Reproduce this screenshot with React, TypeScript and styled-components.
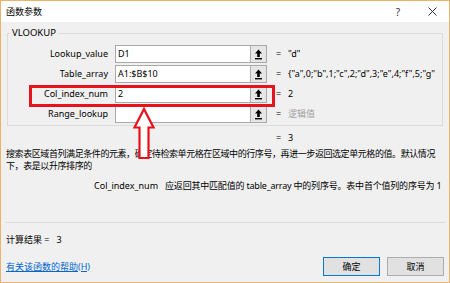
import styled, { createGlobalStyle } from 'styled-components';

const GlobalStyle = createGlobalStyle`
  html, body {
    margin: 0;
    padding: 0;
    background: #f0f0f0;
  }
`;

const Window = styled.div`
  position: relative;
  width: 450px;
  height: 283px;
  box-sizing: border-box;
  border: 1px solid #e9b469;
  display: flex;
  flex-direction: column;
  background: #f0f0f0;
  font-family: "Noto Sans", "Noto Sans CJK SC", sans-serif;
  font-size: 9px;
  color: #000;
  overflow: hidden;
`;

const TitleBar = styled.div`
  height: 21px;
  flex: none;
  display: flex;
  align-items: center;
  background: #fff;
  padding-left: 5px;
`;

const Title = styled.span`
  flex: 1;
  font-size: 9px;
`;

const TitleButton = styled.div`
  width: 34px;
  height: 21px;
  display: flex;
  align-items: center;
  justify-content: center;
  color: #333;
  font-size: 10px;
`;

const Body = styled.div`
  flex: 1;
  display: flex;
  flex-direction: column;
  padding: 0 5px 6px 5px;
`;

const GroupBox = styled.fieldset`
  margin: 5px 1px 0 1px;
  min-width: 0;
  padding: 6px 0 2px 0;
  border: 1px solid #dcdcdc;
`;

const Legend = styled.legend`
  margin-left: 2px;
  padding: 0 2px;
  line-height: 12px;
  font-size: 9.5px;
`;

const ArgGrid = styled.div`
  display: grid;
  grid-template-columns: 100px 152px 1fr;
  column-gap: 7px;
  row-gap: 2px;
`;

const ArgLabel = styled.div`
  text-align: right;
  line-height: 18px;
  white-space: nowrap;
`;

const Field = styled.div`
  height: 18px;
  box-sizing: border-box;
  display: flex;
  border: 1px solid #a9a9a9;
  background: #fff;
`;

const FieldText = styled.div`
  flex: 1;
  padding-left: 2px;
  line-height: 16px;
`;

const RefButton = styled.div`
  width: 15px;
  display: flex;
  align-items: center;
  justify-content: center;
  background: #e6e6e6;
  border-left: 1px solid #adadad;
`;

const ValueCell = styled.div<{ $muted?: boolean }>`
  display: flex;
  line-height: 18px;
  white-space: nowrap;
  padding-left: 2px;
  color: ${p => (p.$muted ? '#a0a0a0' : '#000')};
`;

const Eq = styled.span`
  width: 12px;
  flex: none;
  color: #000;
`;

const ResultLine = styled.div`
  display: flex;
  margin-top: 5px;
  padding-left: 270px;
  line-height: 13px;
`;

const Description = styled.div`
  margin-top: 4px;
  line-height: 12px;
  letter-spacing: -0.42px;
  white-space: nowrap;
`;

const ParamLine = styled.div`
  display: flex;
  margin-top: 8px;
  padding-left: 88px;
  line-height: 12px;
  letter-spacing: -0.2px;
  white-space: nowrap;
`;

const ParamName = styled.span`
  margin-right: 7px;
  letter-spacing: 0;
`;

const Footer = styled.div`
  margin-top: auto;
  display: flex;
  flex-direction: column;
`;

const Separator = styled.div`
  height: 1px;
  background: #dcdcdc;
  margin-right: -1px;
`;

const CalcResult = styled.div`
  margin-top: 11px;
  line-height: 12px;
  white-space: pre;
`;

const ActionRow = styled.div`
  display: flex;
  align-items: center;
  margin-top: 11px;
`;

const HelpLink = styled.a`
  flex: 1;
  color: #0066cc;
  text-decoration: underline;
  line-height: 12px;
`;

const DialogButton = styled.div<{ $primary?: boolean }>`
  width: 57px;
  height: 19px;
  box-sizing: border-box;
  margin-left: 7px;
  display: flex;
  align-items: center;
  justify-content: center;
  background: #e1e1e1;
  border: 1px solid ${p => (p.$primary ? '#0078d7' : '#adadad')};
`;

const Highlight = styled.div`
  position: absolute;
  left: 28px;
  top: 84px;
  width: 246px;
  height: 22px;
  box-sizing: border-box;
  border: 3px solid #e8121c;
`;

const ArrowMark = styled.svg`
  position: absolute;
  left: 131px;
  top: 106px;
`;

const RefIcon = () => (
  <svg width="9" height="11" viewBox="0 0 9 11">
    <path d="M4.5 0.5 L1 4.5 H3.2 V8 H5.8 V4.5 H8 Z" fill="#000" />
    <rect x="1" y="9" width="7" height="1.4" fill="#000" />
  </svg>
);

const CloseIcon = () => (
  <svg width="9" height="9" viewBox="0 0 9 9">
    <path d="M0.5 0.5 L8.5 8.5 M8.5 0.5 L0.5 8.5" stroke="#333" strokeWidth="1" />
  </svg>
);

type Arg = {
  name: string;
  input: string;
  value: string;
  muted?: boolean;
};

const args: Arg[] = [
  { name: 'Lookup_value', input: 'D1', value: '"d"' },
  { name: 'Table_array', input: 'A1:$B$10', value: '{"a",0;"b",1;"c",2;"d",3;"e",4;"f",5;"g"' },
  { name: 'Col_index_num', input: '2', value: '2' },
  { name: 'Range_lookup', input: '', value: '逻辑值', muted: true },
];

export default function App() {
  return (
    <>
      <GlobalStyle />
      <Window>
        <TitleBar>
          <Title>函数参数</Title>
          <TitleButton>?</TitleButton>
          <TitleButton>
            <CloseIcon />
          </TitleButton>
        </TitleBar>
        <Body>
          <GroupBox>
            <Legend>VLOOKUP</Legend>
            <ArgGrid>
              {args.map(a => [
                <ArgLabel key={a.name + 'l'}>{a.name}</ArgLabel>,
                <Field key={a.name + 'f'}>
                  <FieldText>{a.input}</FieldText>
                  <RefButton>
                    <RefIcon />
                  </RefButton>
                </Field>,
                <ValueCell key={a.name + 'v'} $muted={a.muted}>
                  <Eq>=</Eq>
                  <span>{a.value}</span>
                </ValueCell>,
              ])}
            </ArgGrid>
          </GroupBox>
          <ResultLine>
            <Eq>=</Eq>
            <span>3</span>
          </ResultLine>
          <Description>
            搜索表区域首列满足条件的元素，确定待检索单元格在区域中的行序号，再进一步返回选定单元格的值。默认情况
            <br />
            下，表是以升序排序的
          </Description>
          <ParamLine>
            <ParamName>Col_index_num</ParamName>
            <span>应返回其中匹配值的 table_array 中的列序号。表中首个值列的序号为 1</span>
          </ParamLine>
          <Footer>
            <Separator />
            <CalcResult>{'计算结果 =   3'}</CalcResult>
            <ActionRow>
              <HelpLink>有关该函数的帮助(H)</HelpLink>
              <DialogButton $primary>确定</DialogButton>
              <DialogButton>取消</DialogButton>
            </ActionRow>
          </Footer>
        </Body>
        <Highlight />
        <ArrowMark width="24" height="54" viewBox="0 0 24 54">
          <path
            d="M12 2 L2.5 20.5 H7.5 V51 H16.5 V20.5 H21.5 Z"
            fill="#fff"
            stroke="#e8121c"
            strokeWidth="2.2"
            strokeLinejoin="miter"
          />
        </ArrowMark>
      </Window>
    </>
  );
}
